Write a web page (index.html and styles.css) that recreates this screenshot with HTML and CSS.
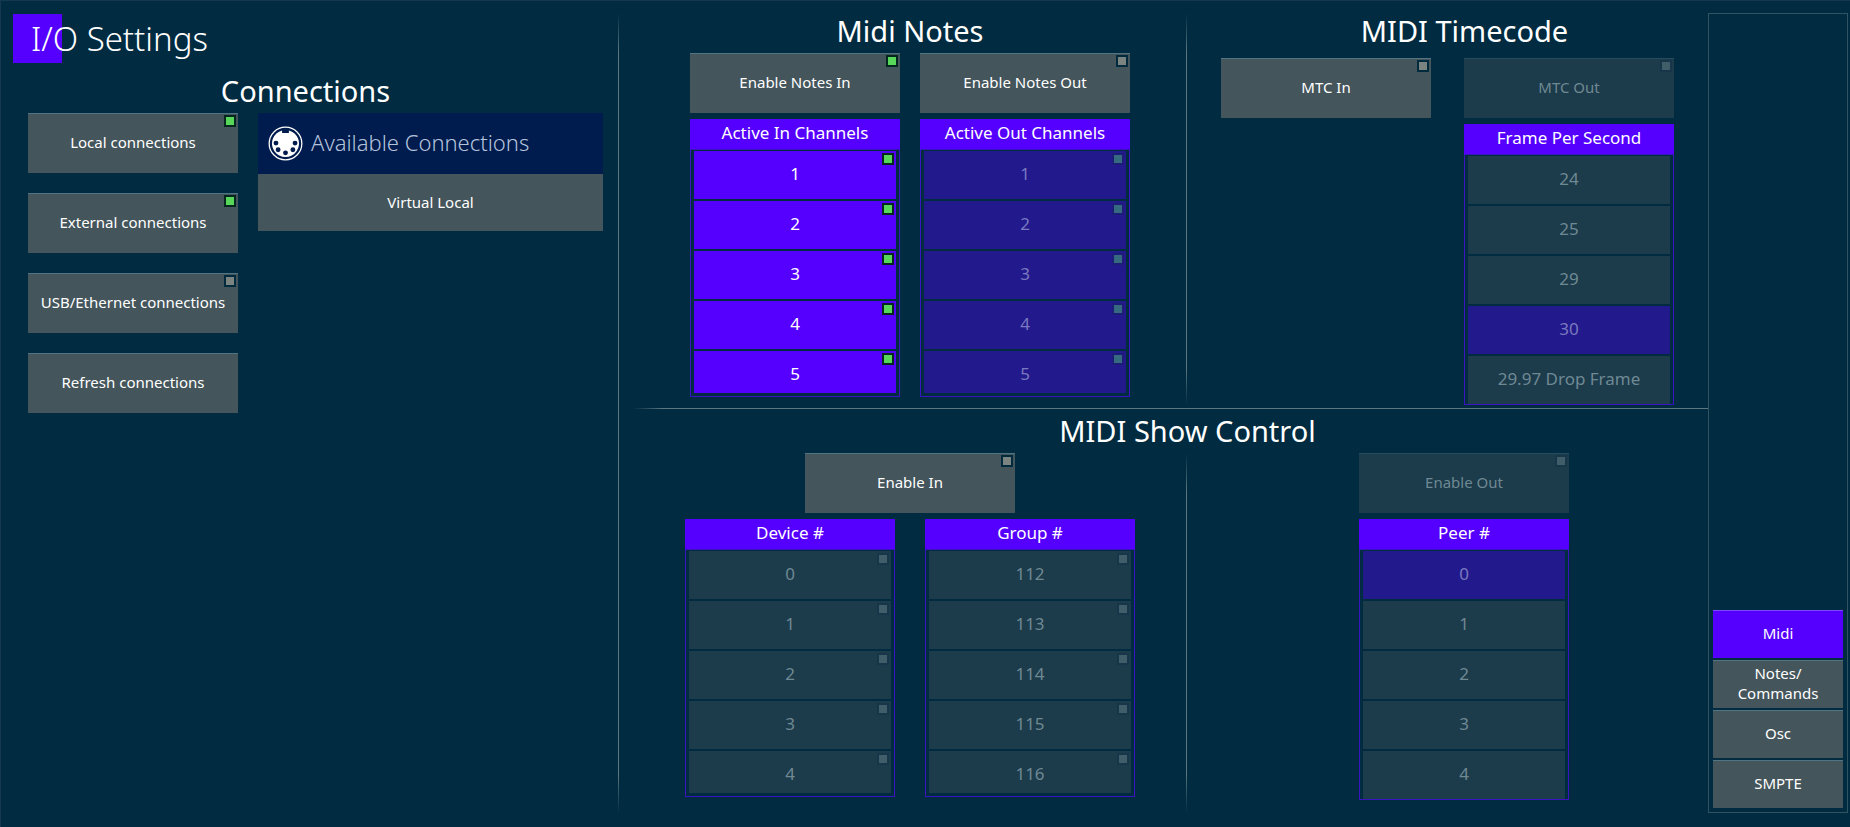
FILE: index.html
```html
<!DOCTYPE html>
<html lang="en">
<head>
<meta charset="utf-8">
<meta name="viewport" content="width=device-width, initial-scale=1">
<title>I/O Settings</title>
<link rel="stylesheet" href="styles.css">
</head>
<body>
<div class="app">
  <main class="panels">
    <section class="connections">
      <h1 class="page-title">I/O Settings</h1>
      <h2 class="heading">Connections</h2>
      <div class="connections-body">
        <div class="connection-buttons">
          <button type="button" class="btn" aria-pressed="true">Local connections<span class="led"></span></button>
          <button type="button" class="btn" aria-pressed="true">External connections<span class="led"></span></button>
          <button type="button" class="btn" aria-pressed="false">USB/Ethernet connections<span class="led"></span></button>
          <button type="button" class="btn">Refresh connections</button>
        </div>
        <div class="available">
          <h3 class="available-title">
            <svg class="din" viewBox="0 0 36 36" aria-hidden="true">
              <circle cx="18" cy="18" r="16.8" fill="none" stroke="#fff" stroke-width="1.3"/>
              <path fill="#fff" d="M14.5 4.6v2.6h7V4.6A13.9 13.9 0 1 1 14.5 4.6z"/>
              <g fill="#001b4d">
                <circle cx="8.2" cy="17.6" r="2.5"/><circle cx="27.8" cy="17.6" r="2.5"/>
                <circle cx="10.4" cy="24.4" r="2.5"/><circle cx="25.6" cy="24.4" r="2.5"/>
                <circle cx="18" cy="27.6" r="2.5"/>
              </g>
            </svg>
            <span class="available-label">Available Connections</span>
          </h3>
          <button type="button" class="available-item">Virtual Local</button>
        </div>
      </div>
    </section>

    <div class="midi">
      <div class="midi-top">
        <section class="notes">
          <h2 class="heading">Midi Notes</h2>
          <div class="pair">
            <div class="stack">
              <button type="button" class="btn" aria-pressed="true">Enable Notes In<span class="led"></span></button>
              <div class="list">
                <h3 class="list-title">Active In Channels</h3>
                <div class="list-body clipped">
                  <button type="button" class="item active" aria-pressed="true">1<span class="led"></span></button>
                  <button type="button" class="item active" aria-pressed="true">2<span class="led"></span></button>
                  <button type="button" class="item active" aria-pressed="true">3<span class="led"></span></button>
                  <button type="button" class="item active" aria-pressed="true">4<span class="led"></span></button>
                  <button type="button" class="item active" aria-pressed="true">5<span class="led"></span></button>
                </div>
              </div>
            </div>
            <div class="stack">
              <button type="button" class="btn" aria-pressed="false">Enable Notes Out<span class="led"></span></button>
              <div class="list">
                <h3 class="list-title">Active Out Channels</h3>
                <div class="list-body clipped">
                  <button type="button" class="item active" aria-pressed="true" disabled>1<span class="led"></span></button>
                  <button type="button" class="item active" aria-pressed="true" disabled>2<span class="led"></span></button>
                  <button type="button" class="item active" aria-pressed="true" disabled>3<span class="led"></span></button>
                  <button type="button" class="item active" aria-pressed="true" disabled>4<span class="led"></span></button>
                  <button type="button" class="item active" aria-pressed="true" disabled>5<span class="led"></span></button>
                </div>
              </div>
            </div>
          </div>
        </section>
        <section class="timecode">
          <h2 class="heading">MIDI Timecode</h2>
          <div class="pair pair-wide">
            <div class="stack">
              <button type="button" class="btn" aria-pressed="false">MTC In<span class="led"></span></button>
            </div>
            <div class="stack">
              <button type="button" class="btn" aria-pressed="false" disabled>MTC Out<span class="led"></span></button>
              <div class="list">
                <h3 class="list-title">Frame Per Second</h3>
                <div class="list-body radio">
                  <button type="button" class="item" disabled>24</button>
                  <button type="button" class="item" disabled>25</button>
                  <button type="button" class="item" disabled>29</button>
                  <button type="button" class="item active" disabled>30</button>
                  <button type="button" class="item" disabled>29.97 Drop Frame</button>
                </div>
              </div>
            </div>
          </div>
        </section>
      </div>

      <section class="show-control">
        <h2 class="heading">MIDI Show Control</h2>
        <div class="show-body">
          <div class="show-in">
            <button type="button" class="btn" aria-pressed="false">Enable In<span class="led"></span></button>
            <div class="pair pair-lists">
              <div class="list">
                <h3 class="list-title">Device #</h3>
                <div class="list-body clipped">
                  <button type="button" class="item" aria-pressed="false" disabled>0<span class="led"></span></button>
                  <button type="button" class="item" aria-pressed="false" disabled>1<span class="led"></span></button>
                  <button type="button" class="item" aria-pressed="false" disabled>2<span class="led"></span></button>
                  <button type="button" class="item" aria-pressed="false" disabled>3<span class="led"></span></button>
                  <button type="button" class="item" aria-pressed="false" disabled>4<span class="led"></span></button>
                </div>
              </div>
              <div class="list">
                <h3 class="list-title">Group #</h3>
                <div class="list-body clipped">
                  <button type="button" class="item" aria-pressed="false" disabled>112<span class="led"></span></button>
                  <button type="button" class="item" aria-pressed="false" disabled>113<span class="led"></span></button>
                  <button type="button" class="item" aria-pressed="false" disabled>114<span class="led"></span></button>
                  <button type="button" class="item" aria-pressed="false" disabled>115<span class="led"></span></button>
                  <button type="button" class="item" aria-pressed="false" disabled>116<span class="led"></span></button>
                </div>
              </div>
            </div>
          </div>
          <div class="show-out">
            <button type="button" class="btn" aria-pressed="false" disabled>Enable Out<span class="led"></span></button>
            <div class="list">
              <h3 class="list-title">Peer #</h3>
              <div class="list-body radio">
                <button type="button" class="item active" disabled>0</button>
                <button type="button" class="item" disabled>1</button>
                <button type="button" class="item" disabled>2</button>
                <button type="button" class="item" disabled>3</button>
                <button type="button" class="item" disabled>4</button>
              </div>
            </div>
          </div>
        </div>
      </section>
    </div>
  </main>

  <nav class="tabs" aria-label="Settings pages">
    <button type="button" class="tab current" aria-current="page">Midi</button>
    <button type="button" class="tab">Notes/<br>Commands</button>
    <button type="button" class="tab">Osc</button>
    <button type="button" class="tab">SMPTE</button>
  </nav>
</div>
</body>
</html>
```
FILE: styles.css
```css
:root {
  --bg: #002b40;
  --btn: #44555b;
  --btn-off: #1c3b4b;
  --accent: #5500ff;
  --accent-off: #221a8c;
  --edge: #4f7484;
  --rule: #5b7882;
}

* {
  box-sizing: border-box;
}

body {
  margin: 0;
  background: var(--bg);
  color: #fff;
  font: 15px/20px "Noto Sans", "Open Sans", sans-serif;
}

button {
  font: inherit;
  color: inherit;
  border: 0;
  padding: 0;
}

h1,
h2,
h3 {
  margin: 0;
  font-weight: 400;
}

.app {
  display: flex;
  min-height: 100vh;
  padding: 12px 2px 14px 0;
  border-top: 1px solid #14394e;
  border-left: 1px solid #14394e;
}

.panels {
  display: grid;
  grid-template-columns: minmax(0, 618fr) minmax(0, 1089fr);
  flex: 1;
}

.connections {
  padding: 0 15px 0 27px;
  border-right: 1px solid;
  border-image: linear-gradient(transparent, var(--rule) 40px, var(--rule) calc(100% - 40px), transparent) 1;
}

.page-title {
  margin-left: -15px;
  padding: 2px 0 0 18px;
  font-size: 33px;
  font-weight: 300;
  line-height: 48px;
  background: linear-gradient(var(--accent), var(--accent)) 0 1px / 49px 49px no-repeat;
}

.heading {
  font-size: 29px;
  line-height: 36px;
  text-align: center;
}

.connections .heading {
  padding: 10px 20px 4px 0;
}

.connections-body {
  display: grid;
  grid-template-columns: minmax(0, 210fr) minmax(0, 345fr);
  gap: 20px;
}

.connection-buttons {
  display: flex;
  flex-direction: column;
  gap: 20px;
}

.available-title {
  display: flex;
  align-items: center;
  gap: 8px;
  height: 61px;
  padding: 0 10px;
  background: #001b4d;
  color: #b4c3dc;
  font-size: 22px;
  font-weight: 300;
}

.available-label {
  padding-bottom: 4px;
}

.din {
  width: 35px;
  height: 35px;
}

.available-item {
  width: 100%;
  height: 57px;
  padding-bottom: 2px;
  background: var(--btn);
}

.btn {
  position: relative;
  width: 100%;
  height: 60px;
  padding-bottom: 4px;
  background: var(--btn);
  border-top: 1px solid var(--edge);
}

.btn:disabled {
  background: var(--btn-off);
  border-top-color: #244c5e;
  color: #6f8993;
}

.led {
  position: absolute;
  top: 1px;
  right: 2px;
  width: 12px;
  height: 12px;
  border: 2px solid #002a3e;
  background: #7c8482;
}

[aria-pressed="true"] > .led {
  border-color: #04281f;
  background: #58d858;
}

:disabled > .led {
  border-color: #17364a;
  background: #405d6a;
}

.midi {
  display: flex;
  flex-direction: column;
}

.midi-top {
  display: grid;
  grid-template-columns: minmax(0, 568fr) minmax(0, 521fr);
  height: 396px;
  border-bottom: 1px solid;
  border-image: linear-gradient(90deg, transparent 15px, var(--rule) 45px) 1;
}

.notes {
  padding-left: 71px;
  padding-right: 56px;
  border-right: 1px solid;
  border-image: linear-gradient(transparent, var(--rule) 40px, var(--rule) calc(100% - 40px), transparent 99%) 1;
}

.notes .heading {
  padding-bottom: 4px;
}

.timecode {
  padding: 0 34px;
}

.timecode .heading {
  padding: 0 0 9px 34px;
}

.pair {
  display: grid;
  grid-template-columns: minmax(0, 1fr) minmax(0, 1fr);
  gap: 20px;
}

.pair-wide {
  gap: 33px;
}

.pair-lists {
  gap: 30px;
}

.stack {
  display: flex;
  flex-direction: column;
  gap: 6px;
}

.list-title {
  height: 30px;
  background: var(--accent);
  font-size: 17px;
  line-height: 28px;
  text-align: center;
}

.list-body {
  display: flex;
  flex-direction: column;
  gap: 2px;
  padding: 1px 3px 3px;
  border: 1px solid #3a14c0;
}

.radio {
  padding-bottom: 0;
}

.item {
  position: relative;
  height: 48px;
  padding-bottom: 2px;
  background: var(--btn);
  font-size: 17px;
}

.clipped .item:last-child {
  height: 42px;
  padding: 3px 0 0;
}

.item.active {
  background: var(--accent);
}

.item:disabled {
  background: var(--btn-off);
  color: #6f8993;
}

.item.active:disabled {
  background: var(--accent-off);
  color: #7a78bf;
}

.item .led {
  top: 2px;
}

.item.active:disabled .led {
  border-color: #1d1c78;
  background: #356a80;
}

.show-control {
  flex: 1;
}

.show-control .heading {
  padding-top: 4px;
  padding-left: 48px;
}

.show-body {
  display: grid;
  grid-template-columns: minmax(0, 568fr) minmax(0, 521fr);
  padding-top: 4px;
}

.show-in {
  display: flex;
  flex-direction: column;
  align-items: center;
  gap: 6px;
  padding: 0 51px 15px 66px;
  border-right: 1px solid;
  border-image: linear-gradient(transparent, var(--rule) 40px, var(--rule) calc(100% - 40px), transparent) 1;
}

.show-in .pair {
  width: 100%;
}

.show-in > .btn {
  width: calc(50% - 15px);
}

.show-out {
  display: flex;
  flex-direction: column;
  gap: 6px;
  padding: 0 139px 0 172px;
}

.tabs {
  display: flex;
  flex-direction: column;
  justify-content: flex-end;
  gap: 2px;
  width: 140px;
  padding: 4px;
  border: 1px solid #2f5462;
}

.tab {
  height: 48px;
  padding-bottom: 4px;
  background: var(--btn);
  border-top: 1px solid var(--edge);
}

.tab.current {
  background: var(--accent);
  border-top-color: #7a48ff;
}
```
